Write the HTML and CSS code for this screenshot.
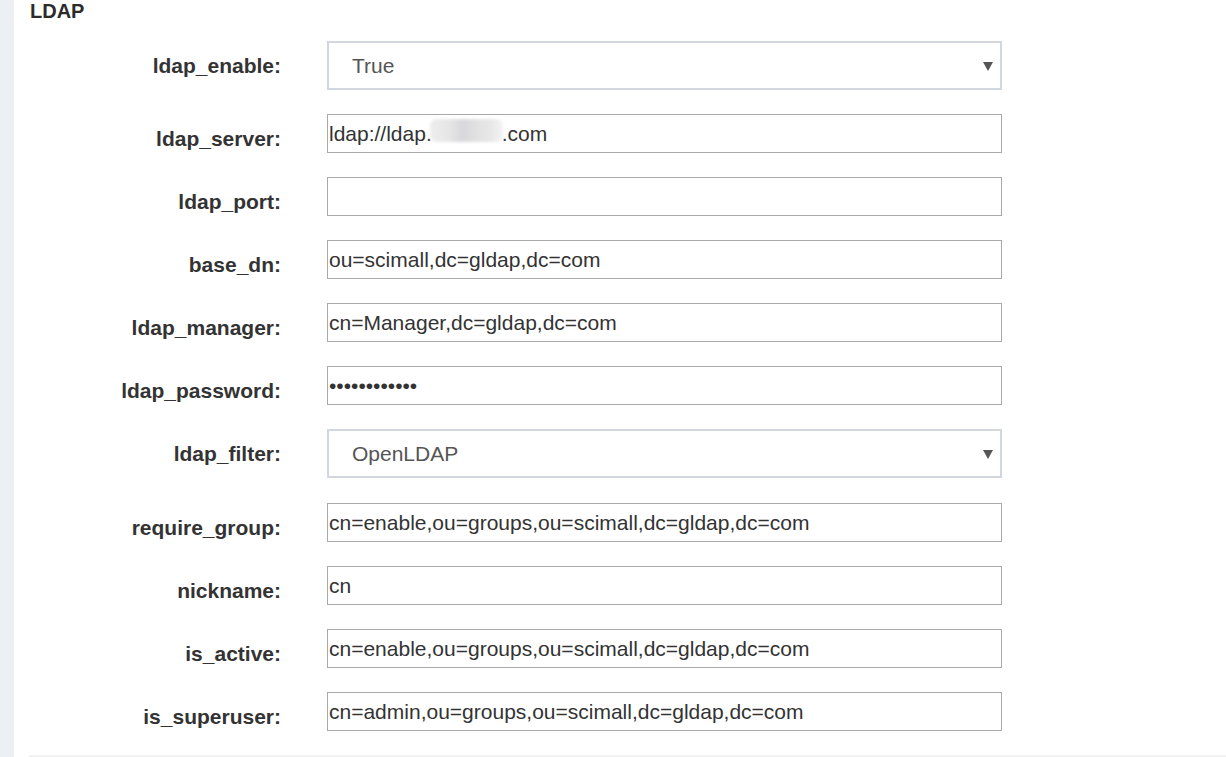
FILE: index.html
```html
<!DOCTYPE html>
<html lang="en">
<head>
<meta charset="utf-8">
<title>LDAP settings</title>
<link rel="stylesheet" href="styles.css">
</head>
<body>
<div class="page">
  <div class="edge"></div>
  <main class="box">
    <h3 class="box-title">LDAP</h3>
    <form class="form">
      <label class="label" for="ldap_enable">ldap_enable:</label>
      <div class="select-wrap">
        <select id="ldap_enable" class="select"><option>True</option><option>False</option></select>
      </div>

      <label class="label" for="ldap_server">ldap_server:</label>
      <div class="field-wrap">
        <input id="ldap_server" class="input" type="text" value="ldap://ldap.            .com">
        <span class="mask"></span>
      </div>

      <label class="label" for="ldap_port">ldap_port:</label>
      <input id="ldap_port" class="input" type="text" value="">

      <label class="label" for="base_dn">base_dn:</label>
      <input id="base_dn" class="input" type="text" value="ou=scimall,dc=gldap,dc=com">

      <label class="label" for="ldap_manager">ldap_manager:</label>
      <input id="ldap_manager" class="input" type="text" value="cn=Manager,dc=gldap,dc=com">

      <label class="label" for="ldap_password">ldap_password:</label>
      <input id="ldap_password" class="input" type="password" value="abcdefghijkl">

      <label class="label" for="ldap_filter">ldap_filter:</label>
      <div class="select-wrap select-wrap--spaced">
        <select id="ldap_filter" class="select"><option>OpenLDAP</option><option>ActiveDirectory</option></select>
      </div>

      <label class="label" for="require_group">require_group:</label>
      <input id="require_group" class="input" type="text" value="cn=enable,ou=groups,ou=scimall,dc=gldap,dc=com">

      <label class="label" for="nickname">nickname:</label>
      <input id="nickname" class="input" type="text" value="cn">

      <label class="label" for="is_active">is_active:</label>
      <input id="is_active" class="input" type="text" value="cn=enable,ou=groups,ou=scimall,dc=gldap,dc=com">

      <label class="label" for="is_superuser">is_superuser:</label>
      <input id="is_superuser" class="input" type="text" value="cn=admin,ou=groups,ou=scimall,dc=gldap,dc=com">
    </form>
    <div class="box-footer"></div>
  </main>
</div>
</body>
</html>
```

FILE: styles.css
```css
html, body {
  margin: 0;
  padding: 0;
  height: 100%;
  overflow: hidden;
  background: #ffffff;
}

body {
  font-family: "Liberation Sans", Arial, sans-serif;
  color: #333333;
}

.page {
  display: flex;
  height: 757px;
}

.edge {
  width: 14px;
  flex: none;
  background: #ecf0f5;
}

.box {
  flex: 1;
  background: #ffffff;
  display: flex;
  flex-direction: column;
}

.box-title {
  margin: 0;
  padding-left: 16px;
  font-size: 20px;
  line-height: 22px;
  font-weight: 700;
  color: #2b2b2b;
}

.form {
  margin-top: 19px;
  display: grid;
  grid-template-columns: 267px 675px;
  column-gap: 46px;
  row-gap: 24px;
  align-items: start;
}

.label {
  text-align: right;
  font-size: 21px;
  line-height: 25px;
  font-weight: 700;
  color: #333333;
  padding-top: 12px;
}

.input {
  box-sizing: border-box;
  width: 100%;
  height: 39px;
  margin: 0;
  border: 1px solid #a9a9a9;
  border-radius: 0;
  padding: 0 1px;
  font-family: "Liberation Sans", Arial, sans-serif;
  font-size: 21px;
  color: #333333;
  background: #ffffff;
  outline: none;
}

.field-wrap {
  position: relative;
}

.mask {
  position: absolute;
  left: 103px;
  top: 5px;
  width: 73px;
  height: 23px;
  border-radius: 6px;
  background: linear-gradient(90deg, #eeeeee 0%, #e6e6e6 25%, #d8d8db 45%, #e2e2e2 65%, #e8e8e8 85%, #f4f4f4 100%);
  filter: blur(1.5px);
}

.select-wrap {
  position: relative;
}

.select-wrap--spaced {
  margin-bottom: 1px;
}

.select {
  box-sizing: border-box;
  width: 100%;
  height: 49px;
  margin: 0;
  border: 2px solid #d2d6de;
  border-radius: 0;
  padding: 0 30px 0 23px;
  font-family: "Liberation Sans", Arial, sans-serif;
  font-size: 21px;
  color: #555555;
  background: #ffffff;
  appearance: none;
  -webkit-appearance: none;
  outline: none;
}

.select-wrap::after {
  content: "";
  position: absolute;
  right: 9px;
  top: 21px;
  width: 0;
  height: 0;
  border-left: 5px solid transparent;
  border-right: 5px solid transparent;
  border-top: 9px solid #555555;
  pointer-events: none;
}

.box-footer {
  margin-top: 24px;
  margin-left: 15px;
  height: 10px;
  background: #f2f2f2;
}
```
